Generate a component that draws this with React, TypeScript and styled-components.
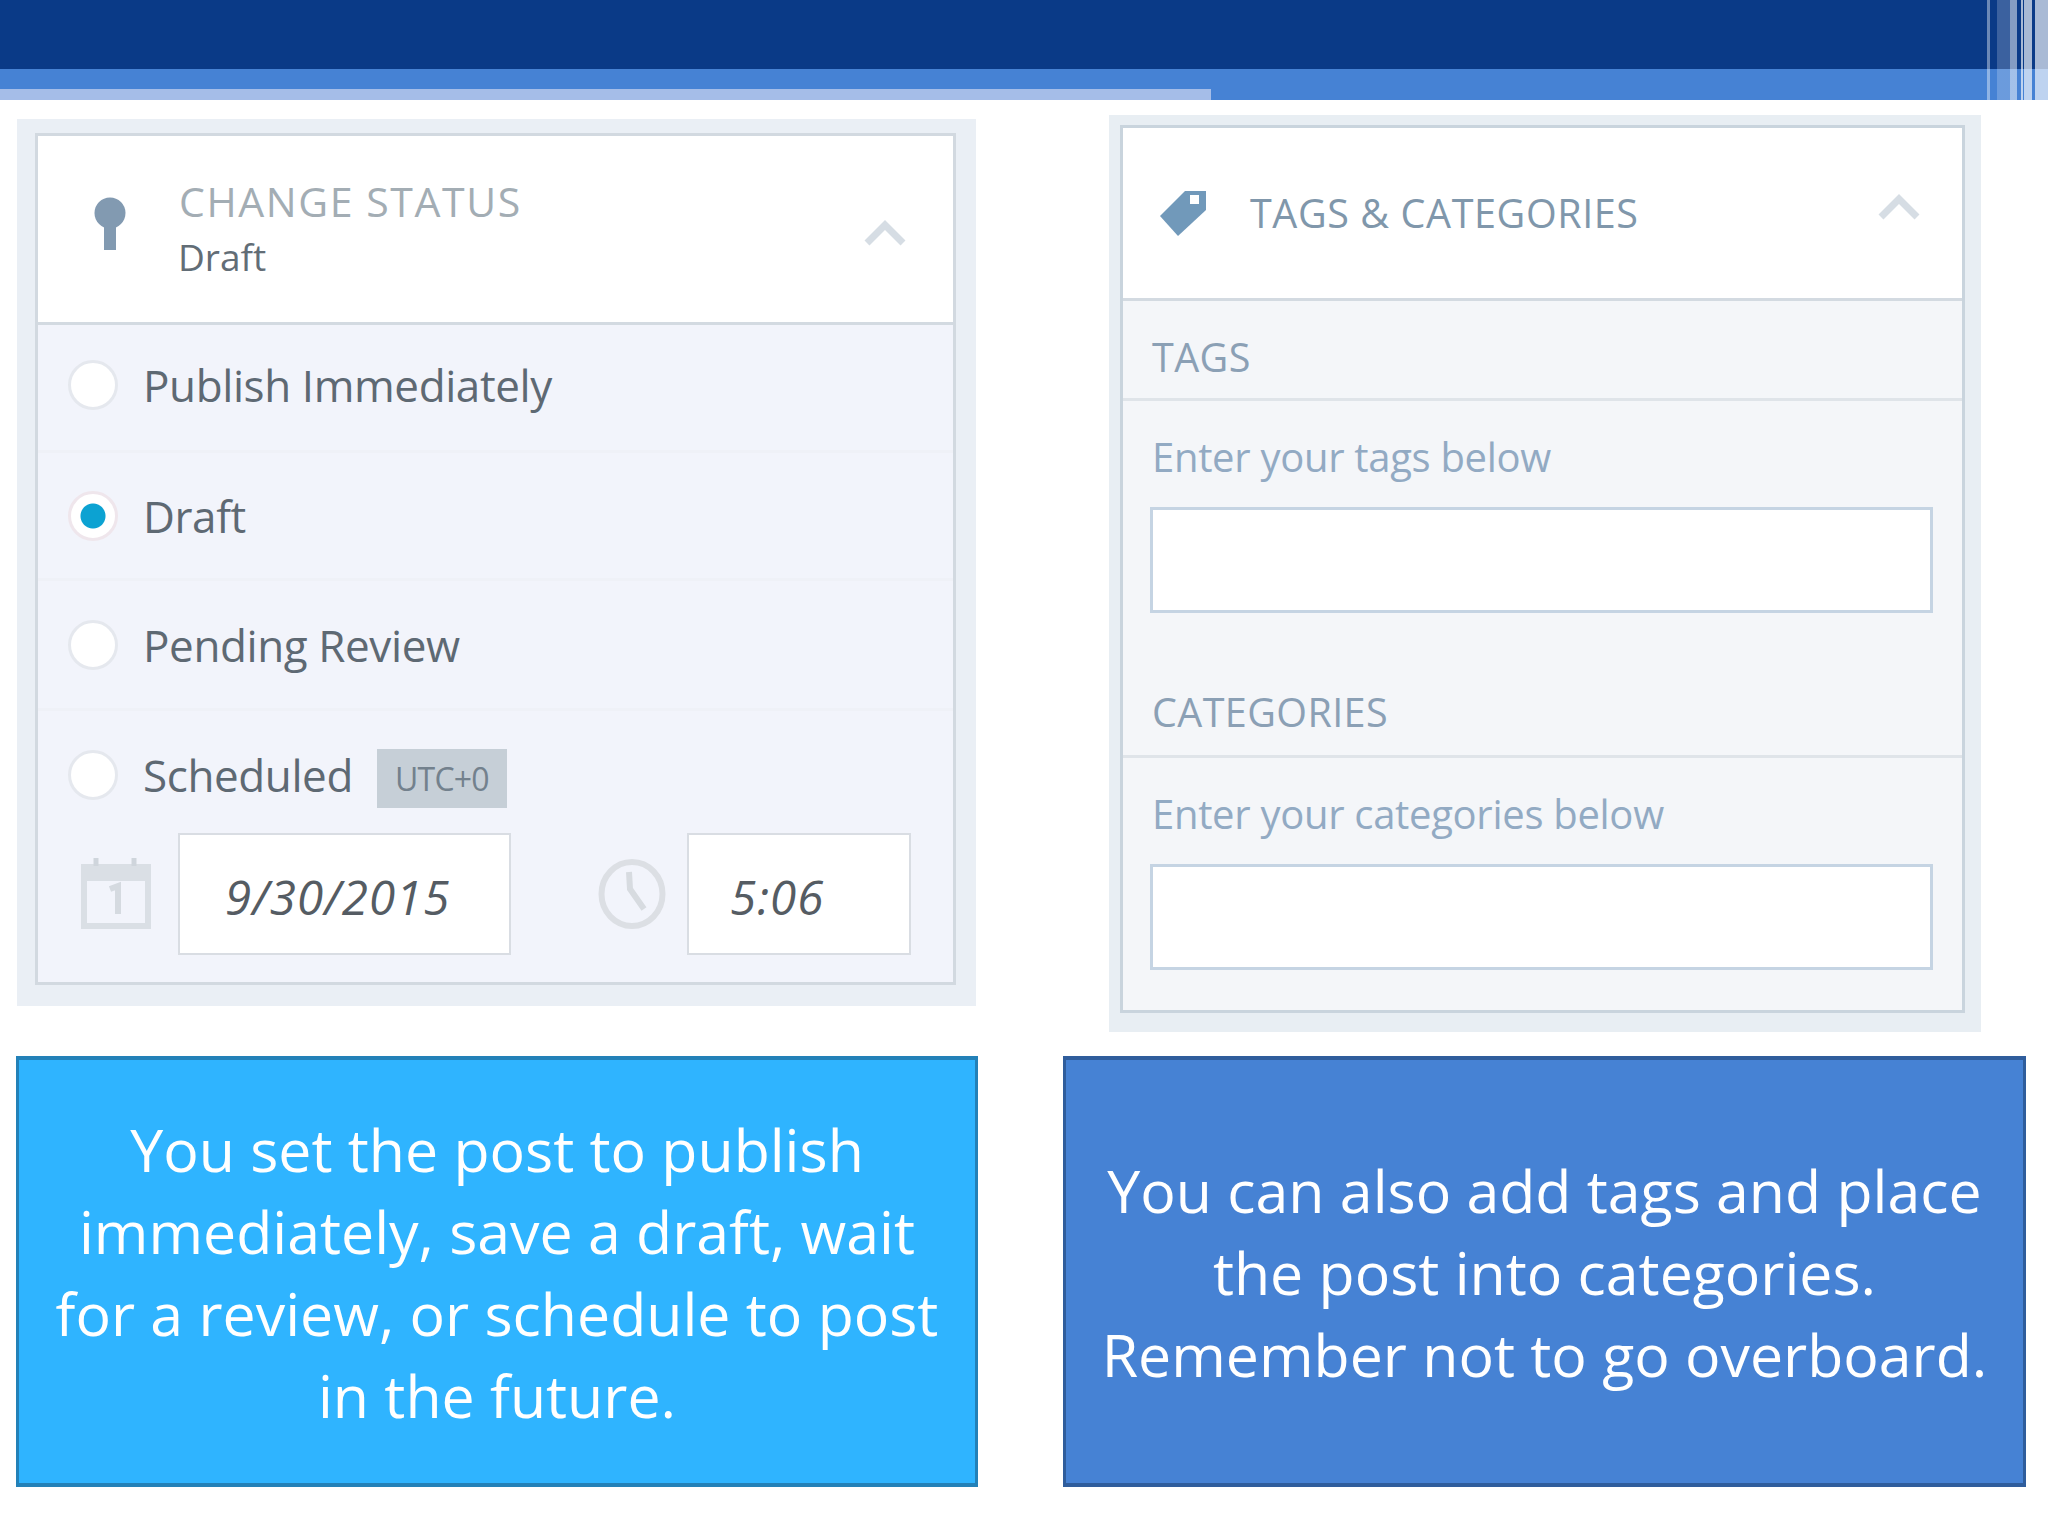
import React from 'react';
import styled, { createGlobalStyle } from 'styled-components';

const GlobalStyle = createGlobalStyle`
  * { box-sizing: border-box; }
  html, body { margin: 0; padding: 0; background: #fff; }
  body { font-family: "Open Sans", "Noto Sans", sans-serif; }
`;

const Slide = styled.div`
  width: 2048px;
  height: 1536px;
  overflow: hidden;
  background: #fff;
`;

const Banner = styled.header`
  position: relative;
  height: 100px;
  background: #4682d4;
  display: flex;
  flex-direction: column;
  justify-content: space-between;
`;

const BannerDark = styled.div`
  height: 69px;
  background: #0a3a87;
`;

const BannerTab = styled.div`
  width: 1211px;
  height: 11px;
  background: #a5bde8;
`;

const Stripes = styled.div`
  position: absolute;
  top: 0;
  right: 0;
  width: 61px;
  height: 100px;
  background: linear-gradient(
    to right,
    rgba(255, 255, 255, 0.4) 0 3px,
    transparent 3px 10px,
    rgba(255, 255, 255, 0.2) 10px 23px,
    rgba(255, 255, 255, 0.5) 23px 30px,
    transparent 30px 34px,
    rgba(255, 255, 255, 0.65) 34px 36px,
    transparent 36px 37px,
    rgba(255, 255, 255, 0.65) 37px 45px,
    transparent 45px 48px,
    rgba(255, 255, 255, 0.65) 48px 61px
  );
`;

const Panels = styled.section`
  height: 956px;
  display: flex;
  align-items: flex-start;
  padding: 15px 0 0 17px;
`;

const StatusPanel = styled.div`
  width: 959px;
  margin-top: 4px;
  padding: 14px 20px 21px 18px;
  background: #eaeff5;
`;

const TagsPanel = styled.div`
  width: 872px;
  margin-left: 133px;
  padding: 10px 16px 19px 11px;
  background: #e8eef3;
`;

const Card = styled.div<{ $bg: string; $line: string }>`
  border: 3px solid ${(p) => p.$line};
  background: ${(p) => p.$bg};
`;

const CardHead = styled.div<{ $h: number; $pad: number }>`
  height: ${(p) => p.$h}px;
  display: flex;
  align-items: center;
  padding-left: ${(p) => p.$pad}px;
  background: #fff;
  border-bottom: 3px solid #d3dae1;
`;

const PinIcon = styled.svg`
  flex: none;
  margin-top: -8px;
`;

const HeadText = styled.div`
  display: flex;
  flex-direction: column;
  margin-left: 52px;
`;

const StatusTitle = styled.div`
  font-size: 41px;
  line-height: 56px;
  letter-spacing: 1.6px;
  color: #a3adb4;
`;

const StatusValue = styled.div`
  margin-left: -1px;
  font-size: 37px;
  line-height: 56px;
  color: #626d76;
`;

const TagsTitle = styled.div`
  margin-left: 43px;
  font-size: 39.5px;
  letter-spacing: 0.6px;
  color: #8097ab;
`;

const Chevron = styled.svg<{ $right: number; $drop: number }>`
  margin-left: auto;
  margin-right: ${(p) => p.$right}px;
  margin-top: ${(p) => p.$drop}px;
  flex: none;
`;

const Row = styled.div<{ $h: number; $top?: number; $tail?: number; $flat?: boolean }>`
  height: ${(p) => p.$h}px;
  padding: ${(p) => p.$top ?? 0}px 0 ${(p) => p.$tail ?? 0}px 30px;
  display: flex;
  align-items: center;
  border-bottom: ${(p) => (p.$flat ? 'none' : '3px solid #eff1f7')};
`;

const Radio = styled.span<{ $on?: boolean }>`
  flex: none;
  width: 50px;
  height: 50px;
  border-radius: 50%;
  background: ${(p) => (p.$on ? 'radial-gradient(circle, #0ca2d2 0 12px, #fff 13px)' : '#fff')};
  border: 3px solid ${(p) => (p.$on ? '#efe6ec' : '#e5e8ee')};
`;

const RowLabel = styled.span`
  margin-left: 25px;
  font-size: 44px;
  color: #5e6973;
  letter-spacing: -0.4px;
`;

const Badge = styled.span`
  margin: 6px 0 0 24px;
  width: 130px;
  height: 59px;
  display: flex;
  align-items: center;
  justify-content: center;
  background: #c6cfd7;
  color: #73818d;
  font-size: 32px;
  letter-spacing: -0.8px;
`;

const ScheduleRow = styled.div`
  display: flex;
  align-items: center;
  padding: 0 0 27px 43px;
`;

const DateBox = styled.div<{ $w: number; $pad: number }>`
  width: ${(p) => p.$w}px;
  height: 122px;
  padding: 5px 0 0 ${(p) => p.$pad}px;
  display: flex;
  align-items: center;
  background: #fff;
  border: 2px solid #d9dde3;
  font-size: 47.5px;
  font-style: italic;
  color: #555c63;
  letter-spacing: 1px;
`;

const CalendarIcon = styled.svg`
  flex: none;
  margin: 0 27px 0 0;
`;

const ClockIcon = styled.svg`
  flex: none;
  margin: 0 21px 0 87px;
`;

const SectionHead = styled.div<{ $h: number; $top?: number; $low?: boolean }>`
  height: ${(p) => p.$h}px;
  padding: ${(p) => p.$top ?? 0}px 0 ${(p) => (p.$low ? 16 : 0)}px 29px;
  display: flex;
  align-items: ${(p) => (p.$low ? 'flex-end' : 'center')};
  border-bottom: 3px solid #dfe4e9;
  font-size: 39.5px;
  letter-spacing: 0.4px;
  color: #8ba0b5;
`;

const SectionBody = styled.div`
  padding: 31px 29px 0 27px;
`;

const Hint = styled.div`
  padding-left: 2px;
  font-size: 40px;
  line-height: 50px;
  letter-spacing: -0.3px;
  color: #92aac3;
`;

const TextBox = styled.div`
  height: 106px;
  margin-top: 25px;
  background: #fff;
  border: 3px solid #c5d4e3;
`;

const CardFoot = styled.div`
  height: 40px;
`;

const Notes = styled.section`
  display: flex;
  padding-left: 16px;
  gap: 85px;
`;

const Note = styled.div<{ $bg: string; $line: string; $w: number }>`
  width: ${(p) => p.$w}px;
  height: 431px;
  display: flex;
  align-items: center;
  justify-content: center;
  background: ${(p) => p.$bg};
  border-style: solid;
  border-width: 4px 3px;
  border-color: ${(p) => p.$line};
  color: #fff;
  font-size: 59px;
  line-height: 82px;
  text-align: center;
  white-space: nowrap;
`;

const ChevronUp = ({ right, drop }: { right: number; drop: number }) => (
  <Chevron $right={right} $drop={drop} width="44" height="26" viewBox="0 0 44 26">
    <path d="M4 23 L22 5 L40 23" fill="none" stroke="#d6dde4" strokeWidth="7" />
  </Chevron>
);

export default function App() {
  return (
    <Slide>
      <GlobalStyle />
      <Banner>
        <BannerDark />
        <BannerTab />
        <Stripes />
      </Banner>

      <Panels>
        <StatusPanel>
          <Card $bg="#f2f4fb" $line="#d2d9e0">
            <CardHead $h={189} $pad={55}>
              <PinIcon width="34" height="56" viewBox="0 0 34 56">
                <circle cx="17" cy="16" r="15.5" fill="#829ab1" />
                <path d="M11 24 H23 V53 H11 Z" fill="#829ab1" />
              </PinIcon>
              <HeadText>
                <StatusTitle>CHANGE STATUS</StatusTitle>
                <StatusValue>Draft</StatusValue>
              </HeadText>
              <ChevronUp right={46} drop={7} />
            </CardHead>
            <Row $h={128} $tail={6}>
              <Radio />
              <RowLabel>Publish Immediately</RowLabel>
            </Row>
            <Row $h={128}>
              <Radio $on />
              <RowLabel>Draft</RowLabel>
            </Row>
            <Row $h={130}>
              <Radio />
              <RowLabel>Pending Review</RowLabel>
            </Row>
            <Row $h={122} $top={6} $flat>
              <Radio />
              <RowLabel>Scheduled</RowLabel>
              <Badge>UTC+0</Badge>
            </Row>
            <ScheduleRow>
              <CalendarIcon width="70" height="72" viewBox="0 0 70 72">
                <path d="M3 20 H67 V68 H3 Z" fill="none" stroke="#dadfe5" strokeWidth="6" />
                <path d="M0 6 H70 V22 H0 Z" fill="#dadfe5" />
                <path d="M15 0 V8 M53 0 V8" stroke="#cfd5dc" strokeWidth="5" />
                <path d="M29 31 L37 28 V56" fill="none" stroke="#d5dae0" strokeWidth="6" />
              </CalendarIcon>
              <DateBox $w={333} $pad={45}>9/30/2015</DateBox>
              <ClockIcon width="68" height="70" viewBox="0 0 68 70">
                <ellipse cx="34" cy="35" rx="30.5" ry="32" fill="none" stroke="#dcdfe4" strokeWidth="6" />
                <path d="M31 13 L32 30 L46 50" fill="none" stroke="#d7dbe0" strokeWidth="6" />
              </ClockIcon>
              <DateBox $w={224} $pad={41}>5:06</DateBox>
            </ScheduleRow>
          </Card>
        </StatusPanel>

        <TagsPanel>
          <Card $bg="#f4f6f9" $line="#c9d4dd">
            <CardHead $h={173} $pad={37}>
              <svg width="47" height="45" viewBox="0 0 47 45">
                <path d="M25 0 H46 V19 L18 45 L0 25 Z" fill="#7199ba" />
                <rect x="30" y="4" width="9" height="9" fill="#fff" />
              </svg>
              <TagsTitle>TAGS &amp; CATEGORIES</TagsTitle>
              <ChevronUp right={41} drop={-12} />
            </CardHead>
            <SectionHead $h={100} $top={14}>TAGS</SectionHead>
            <SectionBody>
              <Hint>Enter your tags below</Hint>
              <TextBox />
            </SectionBody>
            <SectionHead $h={145} $low>CATEGORIES</SectionHead>
            <SectionBody>
              <Hint>Enter your categories below</Hint>
              <TextBox />
            </SectionBody>
            <CardFoot />
          </Card>
        </TagsPanel>
      </Panels>

      <Notes>
        <Note $bg="#2fb4ff" $line="#2381b8" $w={962}>
          <div>
            You set the post to publish
            <br />
            immediately, save a draft, wait
            <br />
            for a review, or schedule to post
            <br />
            in the future.
          </div>
        </Note>
        <Note $bg="#4682d4" $line="#2f5d9c" $w={963}>
          <div>
            You can also add tags and place
            <br />
            the post into categories.
            <br />
            Remember not to go overboard.
          </div>
        </Note>
      </Notes>
    </Slide>
  );
}
